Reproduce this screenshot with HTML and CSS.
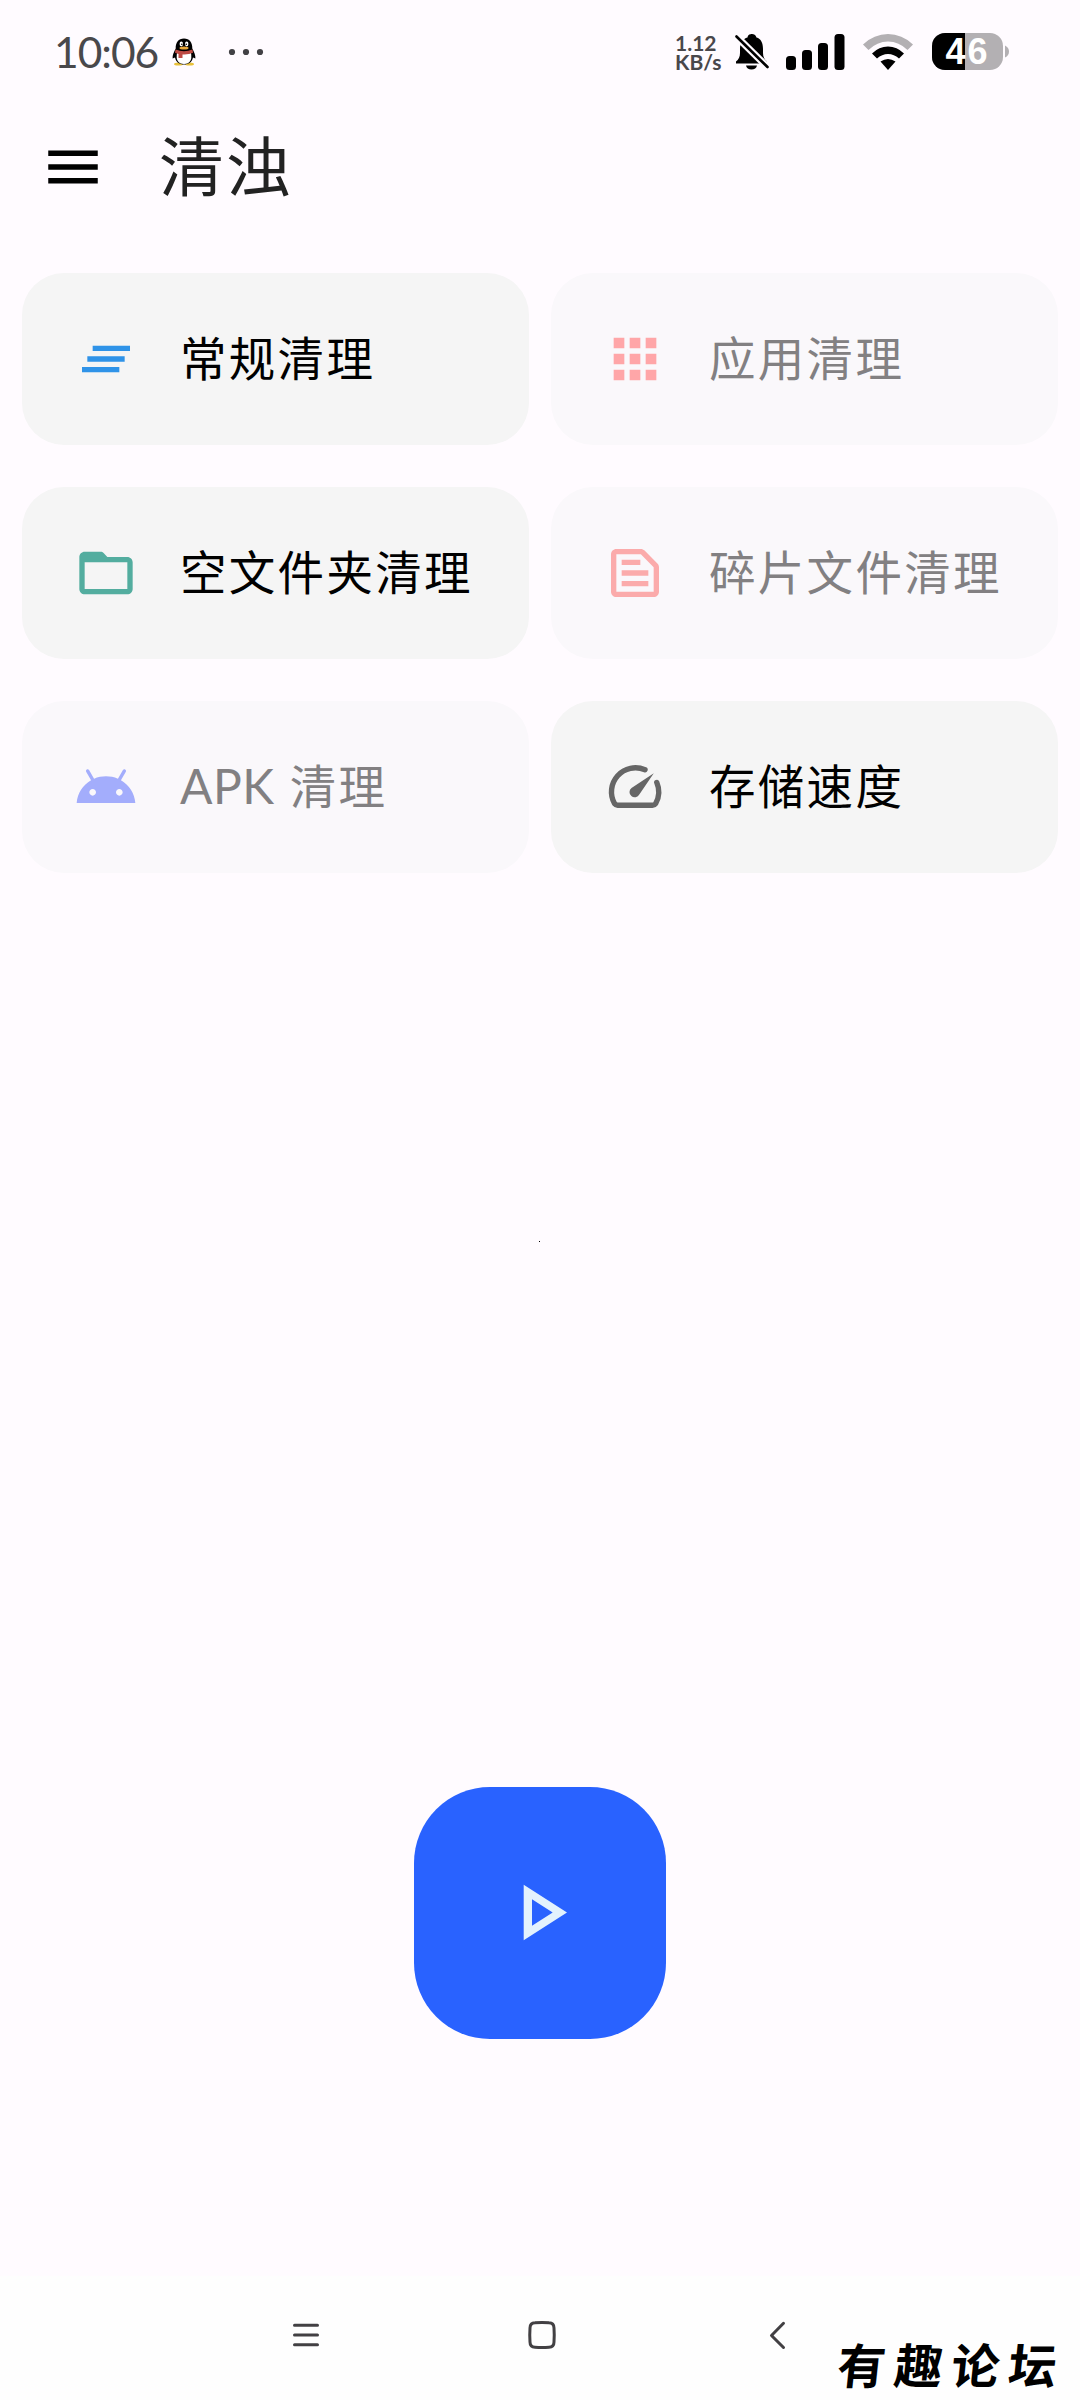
FILE: index.html
```html
<!DOCTYPE html>
<html lang="zh-CN">
<head>
<meta charset="utf-8">
<title>清浊</title>
<link rel="stylesheet" href="styles.css">
</head>
<body>
<div class="screen">
  <header class="status">
    <span class="clock">10:06</span>
    <svg class="penguin" width="24" height="28" viewBox="0 0 24 28">
      <ellipse cx="6.500" cy="26" rx="4.500" ry="1.600" fill="#e8c13a"/><ellipse cx="17.500" cy="26" rx="4.500" ry="1.600" fill="#e8c13a"/>
      <path d="M12 0.500C6.500 0.500 3.500 4.500 3.700 10.500C2 14 0.300 17 0.600 20.500L3 19.500C4 24.500 8 26.500 12 26.500S20 24.500 21 19.500L23.400 20.500C23.700 17 22 14 20.300 10.500C20.500 4.500 17.500 0.500 12 0.500Z" fill="#000"/>
      <path d="M5 15Q12 17 19 15Q21 25.500 12 26Q3 25.500 5 15Z" fill="#fff"/>
      <ellipse cx="9.300" cy="6" rx="1.700" ry="2.400" fill="#fff"/><ellipse cx="14.700" cy="6" rx="1.700" ry="2.400" fill="#fff"/>
      <circle cx="9.800" cy="6.300" r=".8"/><circle cx="14.300" cy="6.300" r=".8"/>
      <ellipse cx="12" cy="10" rx="4.500" ry="1.500" fill="#e9a83a"/>
      <path d="M3.500 11.500Q12 15 20.500 11.500L21 14.800Q16 17 10.500 16.500V20H6.500V16L3 14.800Z" fill="#bd4a43"/>
    </svg>
    <svg class="more" width="36" height="8" viewBox="0 0 36 8" fill="#424145"><circle cx="4" cy="4" r="3.100"/><circle cx="18" cy="4" r="3.100"/><circle cx="32" cy="4" r="3.100"/></svg>
    <span class="spacer"></span>
    <div class="speed"><span>1.12</span><span>KB/s</span></div>
    <svg class="bell" width="34" height="38" viewBox="0 0 34 38">
      <path d="M1 30.500V28.500C3.500 26.500 5 24 5 20V16C5 10 8 5.500 12.500 4.500C13 1.500 15 1 17 1S20.500 1.500 21.500 4.500C26 5.500 28 10 28 16V20C28 24 29.500 26.500 32 28.500V30.500ZM11 32.500H22C21.500 35 19.500 36.500 16.500 36.500S11.500 35 11 32.500Z" fill="#000"/>
      <path d="M0 2L34 35.500" stroke="#fffbff" stroke-width="7"/>
      <path d="M1.500 3.500L32.500 34" stroke="#000" stroke-width="2.600" stroke-linecap="round"/>
    </svg>
    <svg class="signal" width="59" height="37" viewBox="0 0 59 37"><rect x="0" y="22" width="10" height="14" rx="3.500"/><rect x="16" y="16" width="10" height="20" rx="3.500"/><rect x="32" y="9" width="10" height="27" rx="3.500"/><rect x="48.500" y="0" width="10" height="36" rx="3.500"/></svg>
    <svg class="wifi" width="52" height="38" viewBox="0 0 52 38">
      <path d="M1 11.500Q12 1 26 1T51 11.500L45.500 17Q37 8.500 26 8.500T6.500 17Z" fill="#b3b0b3"/>
      <path d="M10 20.500Q17 13.500 26 13.500T42 20.500L37 25.500Q32 21 26 21T15 25.500Z"/>
      <path d="M18.500 28.500Q26 23.500 33.500 28.500L26 37Z"/>
    </svg>
    <svg class="battery" width="78" height="38" viewBox="0 0 78 38">
      <defs><clipPath id="cell"><rect width="71" height="37" rx="13"/></clipPath></defs>
      <g clip-path="url(#cell)"><path d="M0 0H71V37H0Z" fill="#b3b0b3"/><path d="M0 0H33V37H0Z"/></g>
      <path d="M73 12.500Q77 14.500 77 18.500T73 24.500Z" fill="#b3b0b3"/>
      <text x="13.500" y="31" class="level">46</text>
    </svg>
  </header>

  <nav class="appbar">
    <svg width="66" height="66" viewBox="0 0 24 24"><path d="M3 18h18v-2H3v2zm0-5h18v-2H3v2zm0-7v2h18V6H3z"/></svg>
    <h1>清浊</h1>
  </nav>

  <main class="grid">
    <section class="card">
      <svg class="icon" viewBox="0 0 24 24" fill="#2f93e8"><path d="M5 13h14v-2H5v2zm-2 4h14v-2H3v2zM7 7v2h14V7H7z"/></svg>
      <span class="label">常规清理</span>
    </section>
    <section class="card off">
      <svg class="icon" viewBox="0 0 24 24" fill="#ffa6a8"><path d="M4 8h4V4H4v4zm6 12h4v-4h-4v4zm-6 0h4v-4H4v4zm0-6h4v-4H4v4zm6 0h4v-4h-4v4zm6-10v4h4V4h-4zm-6 4h4V4h-4v4zm6 6h4v-4h-4v4zm0 6h4v-4h-4v4z"/></svg>
      <span class="label">应用清理</span>
    </section>
    <section class="card">
      <svg class="icon" viewBox="0 0 24 24" fill="#53ad9f"><path d="M20 6h-7.500l-1.400-1.500C10.800 4.200 10.500 4 10 4H4c-1.100 0-2 .9-2 2v12c0 1.100.9 2 2 2h16c1.100 0 2-.9 2-2V8c0-1.100-.9-2-2-2zm0 12H4V8h16v10z"/></svg>
      <span class="label">空文件夹清理</span>
    </section>
    <section class="card off">
      <svg class="icon" viewBox="0 0 24 24" fill="#fbabab"><path d="M20.400 8.400l-4.800-4.800c-.4-.4-.9-.6-1.400-.6H5c-1.100 0-2 .9-2 2v14c0 1.100.9 2 2 2h14c1.100 0 2-.9 2-2V9.800c0-.5-.2-1-.6-1.400zM19 19H5V5h9.200L19 9.800V19zM7 15h10v2H7zm0-4h10v2H7zM7 7h7v2H7z" fill-rule="evenodd"/></svg>
      <span class="label">碎片文件清理</span>
    </section>
    <section class="card off">
      <svg class="icon" viewBox="0 0 24 24" fill="#a3adfc"><path d="M17.600 9.480l1.840-3.180c.16-.31.04-.69-.26-.85-.29-.15-.65-.06-.83.22l-1.880 3.240c-2.860-1.210-6.080-1.210-8.940 0L5.650 5.670c-.19-.29-.58-.38-.87-.2-.28.18-.37.54-.22.83L6.400 9.480C3.300 11.250 1.280 14.440 1 18h22c-.28-3.560-2.300-6.750-5.400-8.520zM7 15.250c-.69 0-1.250-.56-1.250-1.250s.56-1.250 1.250-1.250 1.250.56 1.250 1.250-.56 1.250-1.250 1.250zm10 0c-.69 0-1.250-.56-1.250-1.250s.56-1.250 1.250-1.250 1.250.56 1.250 1.250-.56 1.250-1.250 1.250z"/></svg>
      <span class="label"><span class="latin">APK</span>清理</span>
    </section>
    <section class="card">
      <svg class="icon" viewBox="0 0 64 64">
        <path d="M42 14.800A24 24 0 0 0 11.500 48.500Q13 50.300 14.500 50.300H49.500Q51.500 50.300 52.700 48.500A24 24 0 0 0 53.800 27.500" fill="none" stroke="#666" stroke-width="5.400" stroke-linecap="round"/>
        <path d="M50.800 18.300L36.300 39.500A5.200 5.200 0 1 1 28.500 33Z" fill="#666"/>
      </svg>
      <span class="label">存储速度</span>
    </section>
  </main>

  <div class="stage">
    <i class="speck"></i>
    <button class="fab" aria-label="开始"><svg width="252" height="252" viewBox="0 0 252 252"><path d="M109.700 97.700L153 125.500L109.700 153.300ZM118 112.300V138.700L138.700 125.500Z" fill="#e3f2fd" fill-rule="evenodd"/></svg></button>
  </div>

  <footer class="navbar">
    <svg width="30" height="30" viewBox="0 0 30 30"><path d="M3.500 5.300H26.500M3.500 15H26.500M3.500 24.700H26.500"/></svg>
    <svg width="30" height="30" viewBox="0 0 30 30"><path d="M3 8Q3 3 8 2.800Q15 2.300 22 2.800Q27 3 27 8Q27.500 15 27 22Q27 27 22 27.200Q15 27.700 8 27.200Q3 27 3 22Q2.500 15 3 8Z"/></svg>
    <svg width="30" height="30" viewBox="0 0 30 30"><path d="M20.500 3.300L8.500 15.500L20.500 27.500"/></svg>
  </footer>
  <div class="watermark"><span>有</span><span>趣</span><span>论</span><span>坛</span></div>
</div>
</body>
</html>
```
FILE: styles.css
```css
* { box-sizing: border-box; }
body { margin: 0; background: #fffbff; font-family: "Noto Sans CJK SC", sans-serif; }
svg { display: block; flex: none; }
.screen { position: relative; width: 1080px; height: 2400px; overflow: hidden; display: flex; flex-direction: column; }

.status { height: 104px; display: flex; align-items: center; padding: 0 70px 0 54px; }
.clock { width: 118px; font: 400 42.500px/50px Lato, sans-serif; color: #49484b; letter-spacing: -1px; white-space: nowrap; }
.more { margin-left: 32px; }
.spacer { flex: 1; }
.speed { width: 60px; display: flex; flex-direction: column; font: 700 21px/19.500px Lato, sans-serif; color: #49474b; white-space: nowrap; }
.bell { margin-right: 17px; }
.signal { margin-right: 17px; }
.wifi { margin-right: 18px; }
.level { font: 700 36px "Liberation Sans", sans-serif; letter-spacing: 2px; fill: #fff; }

.appbar { height: 126px; display: flex; align-items: center; padding-left: 40px; gap: 53px; }
.appbar h1 { margin: 0 0 8px; font-weight: 400; font-size: 65px; line-height: 90px; letter-spacing: 2px; color: #222; }

.grid { padding: 43px 22px 0; display: grid; grid-template-columns: 507px 507px; grid-auto-rows: 172px; gap: 42px 22px; }
.card { display: flex; align-items: center; gap: 42px; padding-left: 52px; border-radius: 42px; background: #f5f5f5; color: #000; }
.label { margin-bottom: 6px; font-size: 46.500px; line-height: 66px; letter-spacing: 2.300px; white-space: nowrap; }
.off { background: #faf8fb; color: #828082; }
.icon { width: 64px; height: 64px; }
.latin { font: 400 48px/60px Lato, sans-serif; letter-spacing: .5px; margin-right: 15px; }

.stage { flex: 1; display: flex; flex-direction: column; align-items: center; }
.speck { width: 1px; height: 1px; margin: 368px 1px 0 0; background: #000; }
.fab { width: 252px; height: 252px; margin-top: 545px; padding: 0; border: 0; border-radius: 76px; background: #2962ff; }

.navbar { height: 124px; background: #fefefe; display: flex; justify-content: center; gap: 206px; padding: 44px 0 0 3px; }
.navbar path { fill: none; stroke: #424043; stroke-width: 3; stroke-linecap: round; stroke-linejoin: round; }

.watermark { position: absolute; left: 838px; top: 2330px; display: flex; gap: 9px; font-weight: 700; font-size: 48px; line-height: 66px; color: #000; transform: skewX(-6deg); }
```
